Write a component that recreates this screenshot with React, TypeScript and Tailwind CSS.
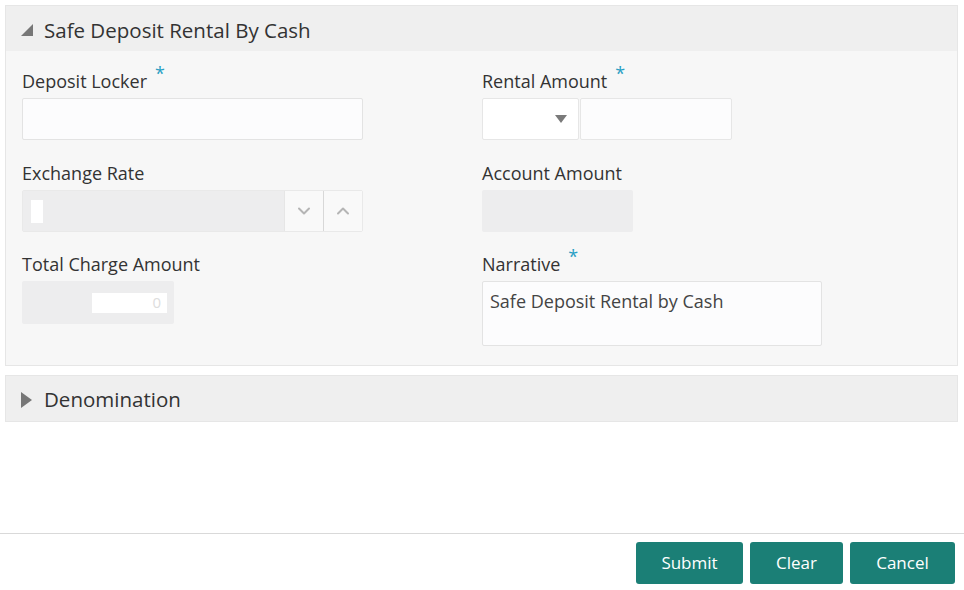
import { ChevronDown, ChevronUp } from 'lucide-react';

const font = { fontFamily: '"Open Sans", "Noto Sans", sans-serif' };

function Label({ text, required }: { text: string; required?: boolean }) {
  return (
    <div className="h-[34px] flex items-end pb-[8px] text-[18px] leading-none text-[#333]">
      <span>{text}</span>
      {required && <span className="ml-[8px] text-[#2a9fc4] text-[18px] relative -top-[8px]">*</span>}
    </div>
  );
}

export default function App() {
  return (
    <div className="w-[964px] h-[590px] bg-white relative" style={font}>
      <div className="pt-[5px] px-[5px] pr-[6px]">
        {/* Main section */}
        <div className="border border-[#e6e6e6]">
          <div className="h-[45px] bg-[#efefef] flex items-center pl-[14px] pt-[3px] gap-[10px]">
            <svg width="14" height="14" viewBox="0 0 14 14">
              <path d="M13 1 L13 13 L1 13 Z" fill="#777" />
            </svg>
            <span className="text-[20.5px] text-[#333]">Safe Deposit Rental By Cash</span>
          </div>
          <div className="bg-[#f7f7f7] pl-[16px] pt-[13px] pb-[19px] grid grid-cols-[460px_1fr]">
            {/* left column */}
            <div className="flex flex-col">
              <Label text="Deposit Locker" required />
              <div className="w-[341px] h-[42px] bg-[#fcfcfd] border border-[#e3e3e3] rounded-[2px]" />
              <div className="h-[16px]" />
              <Label text="Exchange Rate" />
              <div className="w-[341px] h-[42px] flex border border-[#e9e9e9] rounded-[2px]">
                <div className="flex-1 bg-[#ededee] flex items-center pl-[8px]">
                  <div className="w-[12px] h-[23px] bg-white" />
                </div>
                <div className="w-[39px] flex items-center justify-center bg-[#f9f9f9] border-l border-[#e6e6e6]">
                  <ChevronDown size={20} strokeWidth={2.4} color="#b5b5b5" />
                </div>
                <div className="w-[39px] flex items-center justify-center bg-[#f9f9f9] border-l border-[#d8d8d8]">
                  <ChevronUp size={20} strokeWidth={2.4} color="#b5b5b5" />
                </div>
              </div>
              <div className="h-[15px]" />
              <Label text="Total Charge Amount" />
              <div className="w-[152px] h-[43px] bg-[#ededee] rounded-[2px] flex items-center">
                <div className="ml-[70px] w-[75px] h-[20px] bg-white flex items-center justify-end pr-[6px] text-[15px] text-[#ddd]">
                  0
                </div>
              </div>
            </div>
            {/* right column */}
            <div className="flex flex-col">
              <Label text="Rental Amount" required />
              <div className="flex h-[42px] gap-[1px]">
                <div className="w-[97px] bg-white border border-[#e6e6e6] rounded-[2px] flex items-center justify-end pr-[11px]">
                  <svg width="12" height="8" viewBox="0 0 12 8">
                    <path d="M0 0 L12 0 L6 8 Z" fill="#7a7a7a" />
                  </svg>
                </div>
                <div className="w-[152px] bg-[#fcfcfd] border border-[#e6e6e6] rounded-[2px]" />
              </div>
              <div className="h-[16px]" />
              <Label text="Account Amount" />
              <div className="w-[151px] h-[42px] bg-[#ededee] rounded-[2px]" />
              <div className="h-[15px]" />
              <Label text="Narrative" required />
              <div className="w-[340px] h-[65px] bg-[#fcfcfd] border border-[#e3e3e3] rounded-[2px] px-[7px] pt-[10px] text-[18px] leading-none text-[#444]">
                Safe Deposit Rental by Cash
              </div>
            </div>
          </div>
        </div>

        {/* Denomination */}
        <div className="mt-[9px] h-[47px] bg-[#efefef] border border-[#e6e6e6] flex items-center pl-[15px] pt-[2px] gap-[12px]">
          <svg width="11" height="16" viewBox="0 0 11 16">
            <path d="M0 0 L11 8 L0 16 Z" fill="#777" />
          </svg>
          <span className="text-[20.5px] text-[#333]">Denomination</span>
        </div>
      </div>

      {/* Footer */}
      <div className="absolute left-0 right-0 top-[533px] border-t border-[#d9d9d9] flex justify-end gap-[7px] pt-[8px] pr-[9px]">
        {['Submit', 'Clear', 'Cancel'].map((b, i) => (
          <button
            key={b}
            className={`h-[42px] ${i === 0 ? 'w-[107px]' : i === 1 ? 'w-[93px]' : 'w-[105px]'} bg-[#1b7f76] text-white text-[17px] rounded-[3px]`}
          >
            {b}
          </button>
        ))}
      </div>
    </div>
  );
}
